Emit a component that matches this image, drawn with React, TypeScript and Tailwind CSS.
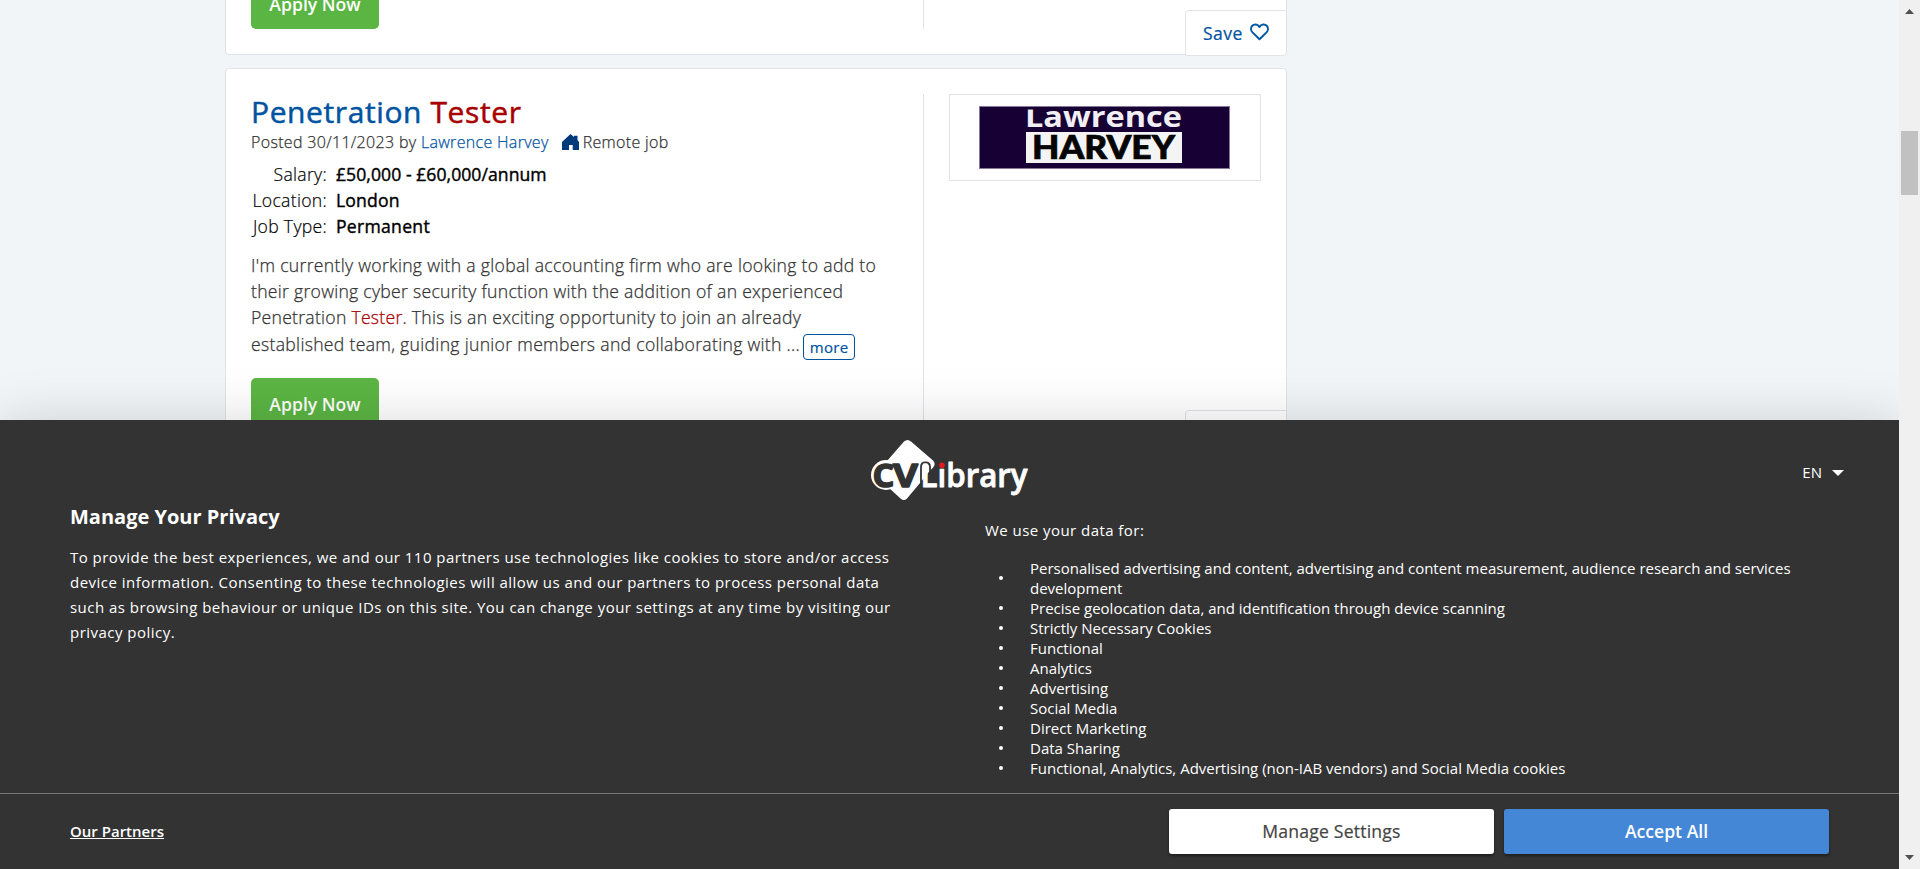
import React from 'react';

const purposes = [
  'Personalised advertising and content, advertising and content measurement, audience research and services development',
  'Precise geolocation data, and identification through device scanning',
  'Strictly Necessary Cookies',
  'Functional',
  'Analytics',
  'Advertising',
  'Social Media',
  'Direct Marketing',
  'Data Sharing',
  'Functional, Analytics, Advertising (non-IAB vendors) and Social Media cookies',
];

function ApplyButton() {
  return (
    <button className="flex h-[51px] w-32 shrink-0 items-center justify-center rounded-[5px] bg-[#5bb543] pt-0.5 text-[17.6px] font-semibold whitespace-nowrap text-white">
      Apply Now
    </button>
  );
}

function SaveTab() {
  return (
    <button className="absolute -right-px -bottom-[2px] flex h-[46px] w-[102px] items-center rounded-tl rounded-br border border-[#e1e3e8] bg-white pl-[17px] text-[17.6px] font-medium tracking-[0.4px] text-[#00539f] [-webkit-text-stroke:0.2px]">
      Save
      <svg className="mb-0.5 ml-[7px]" width="19" height="18" viewBox="0 0 19 18" fill="none" stroke="#0059a5" strokeWidth="2" strokeLinejoin="round">
        <path d="M9.500 16.300 2.500 9.400C.6 7.400.6 4.500 2.300 2.700 4 .9 7.800.7 9.500 4 11.200.7 15 .9 16.700 2.700c1.700 1.800 1.700 4.700-.2 6.700Z" />
      </svg>
    </button>
  );
}

function EmployerLogo() {
  return (
    <div className="flex h-[87px] w-[312px] items-center justify-center border border-[#e1e3e8]">
      <svg width="251" height="63" viewBox="0 0 251 63" className="mr-px block">
        <rect width="251" height="63" fill="#170033" />
        <text x="46" y="20.500" fill="#f1eff3" fontFamily="Open Sans, sans-serif" fontWeight="700" fontSize="29" textLength="157" lengthAdjust="spacingAndGlyphs">Lawrence</text>
        <rect x="0.500" y="0.500" width="250" height="62" fill="none" stroke="#85789a" />
        <rect x="1" y="1" width="249" height="2.500" fill="#170033" />
        <rect x="47" y="26" width="156" height="31" fill="#f4f4f4" />
        <text x="53" y="53" fill="#050505" stroke="#050505" strokeWidth="0.700" fontFamily="Lato, sans-serif" fontWeight="900" fontSize="32" textLength="143" lengthAdjust="spacingAndGlyphs">HARVEY</text>
      </svg>
    </div>
  );
}

function SiteLogo() {
  return (
    <svg width="160" height="60" viewBox="0 0 160 60" className="ml-[1px] block">
      <path d="M34 1.500Q37.500-1.500 41 1.500L63 20.500Q66 23.500 63.500 27L57 34 50 43 37 58.500Q34 61.500 30.500 58.500L18 47 17 21Z" fill="#fff" />
      <circle cx="16" cy="35" r="15" fill="#fff" />
      <g fontFamily="Open Sans, sans-serif" fontWeight="700" fontSize="33" strokeLinejoin="round">
        <text x="2.500" y="46.500" fill="#333" stroke="#333" strokeWidth="1.400" textLength="22" lengthAdjust="spacingAndGlyphs">C</text>
        <text x="23" y="46.500" fill="#333" stroke="#333" strokeWidth="1.400" textLength="25" lengthAdjust="spacingAndGlyphs">V</text>
      </g>
      <path d="M51 51V27q0-4.500 4.500-4.500T60 27v5" fill="none" stroke="#333" strokeWidth="1.800" />
      <text x="50.500" y="47" fill="#fff" stroke="#fff" strokeWidth="0.800" strokeLinejoin="round" fontFamily="Open Sans, sans-serif" fontWeight="600" fontSize="32" textLength="107" lengthAdjust="spacingAndGlyphs">Library</text>
      <rect x="67" y="18" width="9.500" height="10.500" fill="#333" />
      <circle cx="72" cy="25.300" r="2.800" fill="#e11b22" />
    </svg>
  );
}

function JobCard() {
  return (
    <article className="relative flex h-[387px] w-[1062px] shrink-0 rounded border border-[#e1e3e8] bg-white px-[25px] py-[25px]">
      <div className="flex w-[673px] shrink-0 flex-col items-start border-r border-[#e1e3e8]">
        <h2 className="h-9 text-[30px] leading-9 font-medium tracking-[0.600px] whitespace-nowrap text-[#00539f] [-webkit-text-stroke:0.5px]">
          Penetration <span className="text-[#a80000]">Tester</span>
        </h2>
        <div className="flex h-6 items-center text-[16px] leading-6 font-light tracking-[0.320px] whitespace-nowrap text-[#333] [-webkit-text-stroke:0.25px]">
          Posted 30/11/2023 by&nbsp;<span className="text-[#00539f]">Lawrence Harvey</span>
          <svg className="mr-[4px] ml-[13px]" width="17" height="16" viewBox="0 0 17 16" fill="#003a7a">
            <path d="M8.500 0 12 3V1.800h3.500V6L17 8v8h-6.300v-5H7v5H0V8Z" />
          </svg>
          Remote job
        </div>
        <dl className="mt-[7px] grid grid-cols-[76px_auto] gap-x-[9px] text-[17.600px] leading-[26px] whitespace-nowrap text-black">
          <dt className="text-right font-light tracking-[0.300px] [-webkit-text-stroke:0.2px]">Salary:</dt>
          <dd className="font-medium tracking-[0.050px] [-webkit-text-stroke:0.4px]">£50,000 - £60,000/annum</dd>
          <dt className="text-right font-light tracking-[0.300px] [-webkit-text-stroke:0.2px]">Location:</dt>
          <dd className="font-medium tracking-[0.150px] [-webkit-text-stroke:0.4px]">London</dd>
          <dt className="text-right font-light tracking-[0.300px] [-webkit-text-stroke:0.2px]">Job Type:</dt>
          <dd className="font-medium tracking-[0.280px] [-webkit-text-stroke:0.4px]">Permanent</dd>
        </dl>
        <div className="mt-[13px] text-[17.600px] leading-[26px] font-light tracking-[0.310px] whitespace-nowrap text-[#333] [-webkit-text-stroke:0.25px]">
          <p>I'm currently working with a global accounting firm who are looking to add to</p>
          <p className="tracking-[0.280px]">their growing cyber security function with the addition of an experienced</p>
          <p className="tracking-[0.270px]">Penetration <span className="text-[#a80000]">Tester</span>. This is an exciting opportunity to join an already</p>
          <p className="flex h-[30px] items-start pt-px">
            established team, guiding junior members and collaborating with ...
            <button className="mt-[3px] ml-[3px] h-[26px] w-[52px] rounded border border-[#00539f] bg-white text-[15px] leading-[22px] font-medium text-[#00539f] [-webkit-text-stroke:0.2px]">more</button>
          </p>
        </div>
        <div className="mt-auto flex">
          <ApplyButton />
        </div>
      </div>
      <div className="pl-[25px]">
        <EmployerLogo />
      </div>
      <SaveTab />
    </article>
  );
}

function Scrollbar() {
  return (
    <div className="flex w-[21px] shrink-0 flex-col items-center bg-[#f0f0f0]">
      <svg className="mt-[9px] shrink-0" width="9" height="5" viewBox="0 0 9 5" fill="#505050"><path d="M4.500 0 9 5H0Z" /></svg>
      <div className="mt-[117px] h-16 w-[17px] shrink-0 bg-[#c1c1c1]" />
      <svg className="mt-auto mb-[9px] shrink-0" width="9" height="5" viewBox="0 0 9 5" fill="#505050"><path d="M4.500 5 9 0H0Z" /></svg>
    </div>
  );
}

function PrivacyPanel() {
  return (
    <section className="relative flex h-[449px] shrink-0 flex-col bg-[#333] text-white shadow-[0_0_50px_rgba(0,0,0,0.15)]">
      <header className="grid h-20 shrink-0 grid-cols-3 items-start px-[55px] pt-5">
        <span />
        <div className="flex justify-center"><SiteLogo /></div>
        <div className="flex h-16 items-center justify-end text-[15px]">
          EN
          <svg className="mt-px ml-[10px]" width="12" height="6" viewBox="0 0 12 6" fill="#fff"><path d="M0 0H12L6 6Z" /></svg>
        </div>
      </header>
      <div className="flex grow px-[70px]">
        <div className="w-[914px] shrink-0">
          <h3 className="mt-[3px] text-[20px] leading-7 font-bold whitespace-nowrap">Manage Your Privacy</h3>
          <p className="mt-[14px] text-[15px] leading-[25px] tracking-[0.475px] whitespace-nowrap">
            To provide the best experiences, we and our 110 partners use technologies like cookies to store and/or access<br />
            device information. Consenting to these technologies will allow us and our partners to process personal data<br />
            such as browsing behaviour or unique IDs on this site. You can change your settings at any time by visiting our<br />
            privacy policy.
          </p>
        </div>
        <div className="w-[830px] pl-px">
          <p className="mt-[18px] text-[15px] leading-[25px] tracking-[0.450px]">We use your data for:</p>
          <ul className="mt-[15px] text-[15px] leading-5">
            {purposes.map((p) => (
              <li key={p} className="flex items-center">
                <span className="mr-[27px] ml-[14px] size-1 shrink-0 rounded-full bg-white" />
                <span>{p}</span>
              </li>
            ))}
          </ul>
        </div>
      </div>
      <footer className="flex h-[76px] shrink-0 items-center gap-[10px] border-t border-[#777] pr-[70px] pl-[70px]">
        <a className="mr-auto text-[15px] font-semibold underline">Our Partners</a>
        <button className="h-[45px] w-[325px] rounded-[3px] bg-white text-[17.600px] font-medium tracking-[0.200px] text-[#444] shadow-[0_2px_3px_rgba(0,0,0,0.4)] [-webkit-text-stroke:0.2px]">Manage Settings</button>
        <button className="h-[45px] w-[325px] rounded-[3px] bg-[#4487d6] text-[17.600px] font-semibold text-white shadow-[0_2px_3px_rgba(0,0,0,0.4)]">Accept All</button>
      </footer>
    </section>
  );
}

export default function App() {
  return (
    <div className="flex h-[869px] w-[1920px] overflow-hidden bg-[#f1f5f8] font-['Open_Sans',sans-serif]">
      <div className="flex w-[1899px] flex-col overflow-hidden">
        <main className="flex h-[420px] shrink-0 flex-col gap-[13px] pl-[225px]">
          <article className="relative flex h-[55px] w-[1062px] shrink-0 items-start rounded-b border border-t-0 border-[#e1e3e8] bg-white px-[25px]">
            <div className="flex h-[29px] w-[673px] items-end border-r border-[#e1e3e8]">
              <ApplyButton />
            </div>
            <SaveTab />
          </article>
          <JobCard />
        </main>
        <PrivacyPanel />
      </div>
      <Scrollbar />
    </div>
  );
}
